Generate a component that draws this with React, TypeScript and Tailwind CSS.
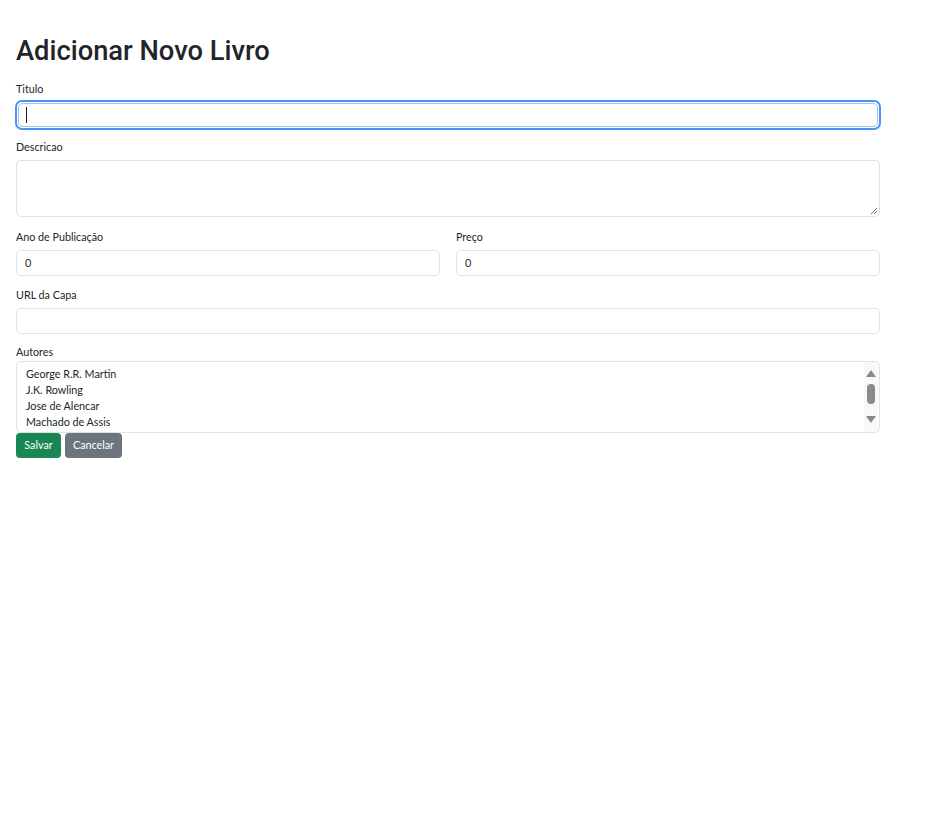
import React from "react";

const font = { fontFamily: 'Lato, "Open Sans", sans-serif' };

function Label({ children, className = "" }: { children: React.ReactNode; className?: string }) {
  return <div className={"text-[10.75px] leading-[18px] text-[#212529] " + className}>{children}</div>;
}

function Field({ value = "" }: { value?: string }) {
  return (
    <div className="h-[26px] w-full rounded-[5px] border border-[#dee2e6] bg-white px-[8px] text-[10.75px] leading-[24px] text-[#212529]">
      {value}
    </div>
  );
}

export default function App() {
  const autores = ["George R.R. Martin", "J.K. Rowling", "Jose de Alencar", "Machado de Assis"];
  return (
    <div className="min-h-screen bg-white text-[#212529]" style={font}>
      <div className="w-[864px] ml-[16px] pt-[34px]">
        <h1
          className="text-[27.3px] leading-[34px] font-medium mb-[12px]"
          style={{ fontFamily: 'Roboto, "Open Sans", sans-serif' }}
        >
          Adicionar Novo Livro
        </h1>

        <div className="mb-[8px]">
          <Label className="mb-[2px]">Titulo</Label>
          <div className="h-[30px] -mx-[1px] rounded-[7px] border-2 border-[#4a94f6] bg-white p-[1px]">
            <div className="h-full w-full rounded-[5px] border border-[#9cc2f7] px-[7px] flex items-center">
              <div className="w-px h-[16px] bg-[#212529]" />
            </div>
          </div>
        </div>

        <div className="mb-[11px]">
          <Label className="mb-[4px]">Descricao</Label>
          <div className="relative h-[57px] w-full rounded-[5px] border border-[#dee2e6] bg-white">
            <svg className="absolute right-[1px] bottom-[1px]" width="8" height="8" viewBox="0 0 8 8">
              <line x1="1" y1="7" x2="7" y2="1" stroke="#777" strokeWidth="1" />
              <line x1="4" y1="7" x2="7" y2="4" stroke="#777" strokeWidth="1" />
            </svg>
          </div>
        </div>

        <div className="grid grid-cols-2 gap-x-[16px] mb-[10px]">
          <div>
            <Label className="mb-[4px]">Ano de Publicação</Label>
            <Field value="0" />
          </div>
          <div>
            <Label className="mb-[4px]">Preço</Label>
            <Field value="0" />
          </div>
        </div>

        <div className="mb-[9px]">
          <Label className="mb-[4px]">URL da Capa</Label>
          <Field />
        </div>

        <div>
          <Label>Autores</Label>
          <div className="h-[72px] w-full rounded-[5px] border border-[#dee2e6] bg-white flex overflow-hidden">
            <div className="flex-1 pl-[9px] pt-[4px] text-[10.75px] leading-[16px] text-[#212529]">
              {autores.map((a) => (
                <div key={a}>{a}</div>
              ))}
            </div>
            <div className="w-[14px] bg-[#f8f8f8] flex flex-col items-center pt-[8px] pb-[9px] mr-[1px]">
              <svg width="10" height="7" viewBox="0 0 10 7">
                <polygon points="5,0 10,7 0,7" fill="#8a8a8a" />
              </svg>
              <div className="mt-[7px] w-[8px] h-[20px] rounded-[4px] bg-[#8a8a8a]" />
              <div className="flex-1" />
              <svg width="10" height="7" viewBox="0 0 10 7">
                <polygon points="0,0 10,0 5,7" fill="#8a8a8a" />
              </svg>
            </div>
          </div>
        </div>

        <div className="flex gap-[4px]">
          <button className="h-[25px] w-[45px] rounded-[4px] bg-[#198754] text-white text-[10.75px]">Salvar</button>
          <button className="h-[25px] w-[57px] rounded-[4px] bg-[#6c757d] text-white text-[10.75px]">Cancelar</button>
        </div>
      </div>
    </div>
  );
}
